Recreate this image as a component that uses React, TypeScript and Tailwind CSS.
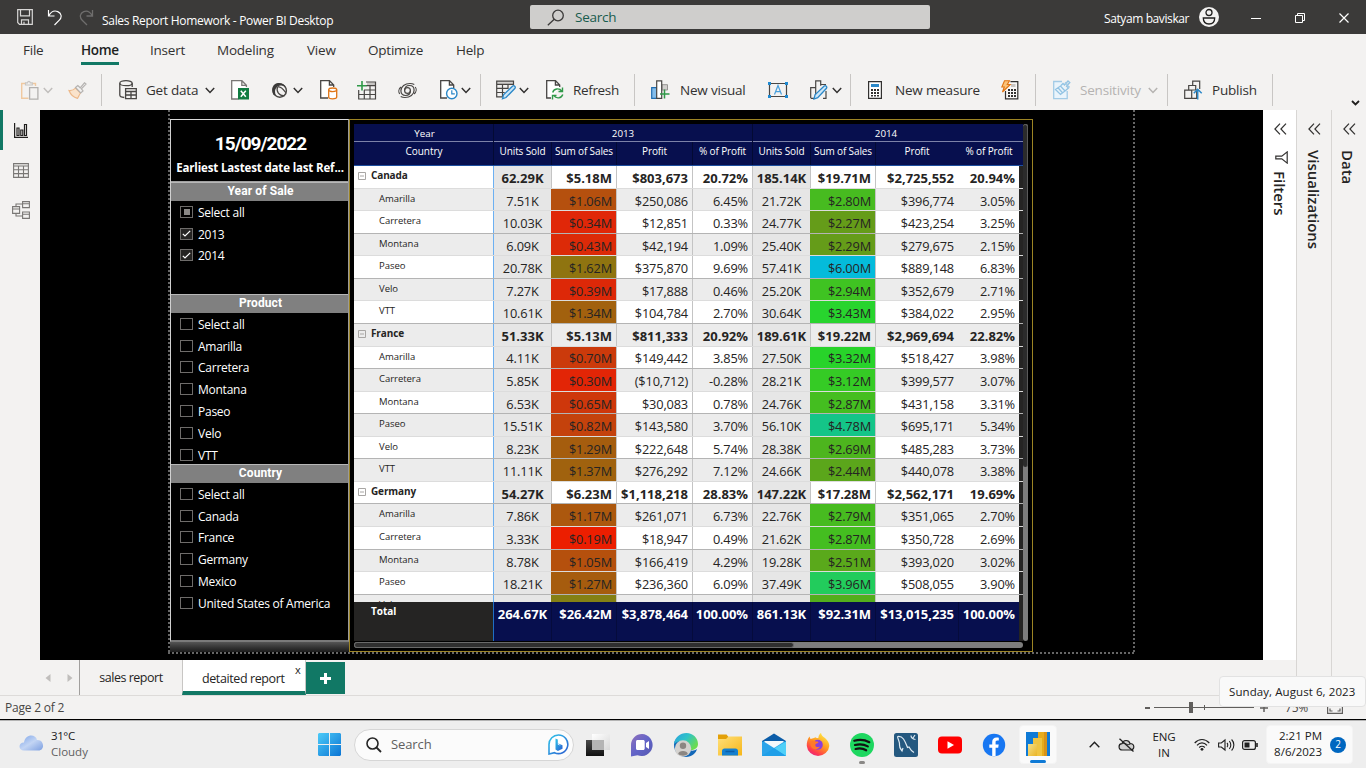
import React from "react";

type Kids = { children?: React.ReactNode; className?: string };

function Ico({ w, h, children, className = "" }: { w: number; h: number } & Kids) {
  return (
    <svg width={w} height={h} viewBox={`0 0 ${w} ${h}`} fill="none" className={`block shrink-0 ${className}`}>
      {children}
    </svg>
  );
}

function Slot({ children, className = "" }: Kids) {
  return <div className={`flex shrink-0 items-center whitespace-nowrap ${className}`}>{children}</div>;
}

function Chev({ color = "#323130" }: { color?: string }) {
  return (
    <Ico w={10} h={7}>
      <path d="M0.8 1 5 5.4 9.2 1" stroke={color} strokeWidth="1.5" />
    </Ico>
  );
}

/* ---------- Title bar ---------- */
function TitleBar() {
  return (
    <div className="flex h-[34px] shrink-0 items-center bg-[#3b3a39] text-white">
      <Slot className="w-[31px] pl-[17px]">
        <Ico w={16} h={16}>
          <path d="M.7.7h14.6v14.6H2.5L.7 13.5z M3.5.7v6.2h9V.7 M4.5 15.3v-4.5h7v4.5 M7 15.3v-2.5" stroke="#d8d7d6" strokeWidth="1.2" />
        </Ico>
      </Slot>
      <Slot className="w-[48px] pl-[16px]">
        <Ico w={16} h={17}>
          <path d="M1.5 1v6h6M1.8 6.6C4 2.8 7.5 1.2 10.8 2.6c4 1.7 4.300 5.800 1.500 8.600L7.500 16" stroke="#fff" strokeWidth="1.15" />
        </Ico>
      </Slot>
      <Slot className="w-[23px]">
        <Ico w={15} h={17}>
          <path d="M13.500 1v6h-6M13.200 6.600C11 2.800 8 1.200 4.700 2.600c-4 1.700-4.300 5.800-1.500 8.600L8 16" stroke="#6f6e6d" strokeWidth="1.3" />
        </Ico>
      </Slot>
      <Slot className="w-[428px] pt-[8px] text-[12px] tracking-[-0.310px]">Sales Report Homework - Power BI Desktop</Slot>
      <div className="flex h-[24px] w-[400px] shrink-0 items-center rounded-[2px] bg-[#cfcecc] pl-[17px]">
        <Ico w={18} h={17}>
          <circle cx="11" cy="6.500" r="5.300" stroke="#3b3a39" strokeWidth="1.300" />
          <path d="M7.200 10.300 .800 16.300" stroke="#3b3a39" strokeWidth="1.300" />
        </Ico>
        <span className="ml-[10px] text-[13.500px] tracking-[-0.250px] text-[#185c4d]">Search</span>
      </div>
      <Slot className="w-[269px] pl-[174px] pt-[3px] text-[12px] tracking-[-0.400px]">Satyam baviskar</Slot>
      <Slot className="w-[51px]">
        <Ico w={20} h={20}>
          <circle cx="10" cy="10" r="10" fill="#f3f2f1" />
          <circle cx="10" cy="5.500" r="3" stroke="#201f1e" strokeWidth="1.300" />
          <path d="M4.300 11h11.400c0 4-2.400 6-5.700 6s-5.700-2-5.700-6z" stroke="#201f1e" strokeWidth="1.300" />
        </Ico>
      </Slot>
      <Slot className="w-[45px] pt-[2px]">
        <div className="ml-[1px] h-px w-[10px] bg-white" />
      </Slot>
      <Slot className="w-[44px] pt-[2px]">
        <Ico w={10} h={10}>
          <path d="M.5 2.500h7v7h-7zM2.500 2.500v-2h7v7h-2" stroke="#fff" />
        </Ico>
      </Slot>
      <Slot className="pt-[2px]">
        <Ico w={10} h={10}>
          <path d="M.5.5l9 9M9.500.5l-9 9" stroke="#fff" strokeWidth="1.200" />
        </Ico>
      </Slot>
    </div>
  );
}

/* ---------- Ribbon ---------- */
function Divider() {
  return <div className="h-[32px] w-px bg-[#c8c6c4]" />;
}

function Ribbon() {
  const tab = "flex h-[32px] shrink-0 items-center whitespace-nowrap text-[13.500px] tracking-[-0.220px] text-[#323130]";
  return (
    <div className="flex h-[76px] shrink-0 flex-col bg-[#f3f2f1]">
      <div className="flex h-[36px] pl-[23px]">
        <div className={`${tab} w-[58px]`}>File</div>
        <div className="w-[69px] shrink-0">
          <div className="flex h-[31px] w-[38px] items-end whitespace-nowrap border-b-[3px] border-[#117865]">
            <span className="pb-[2px] text-[13.500px] font-semibold tracking-[-0.350px] text-[#201f1e]">Home</span>
          </div>
        </div>
        <div className={`${tab} w-[67px]`}>Insert</div>
        <div className={`${tab} w-[90px]`}>Modeling</div>
        <div className={`${tab} w-[61px]`}>View</div>
        <div className={`${tab} w-[88px]`}>Optimize</div>
        <div className={tab}>Help</div>
      </div>
      <div className="flex h-[40px] items-center text-[13.500px] tracking-[-0.200px] text-[#323130]">
        <Slot className="w-[43px] pl-[21px]">
          <Ico w={18} h={20}>
            <path d="M5 3.500H.7v14.800H7.500M11 3.500h3.500V6" stroke="#f0c9a0" strokeWidth="1.400" />
            <path d="M4.500 5V2.800h2C6.800 1 9 1 9.300 2.800h2V5z" stroke="#c8c6c4" strokeWidth="1.200" />
            <path d="M8.600 7.600h8.300v11.600H8.600z" stroke="#b3b1af" strokeWidth="1.300" />
          </Ico>
        </Slot>
        <Slot className="w-[25px]"><Chev color="#c0bebc" /></Slot>
        <Slot className="w-[33px]">
          <Ico w={19} h={17}>
            <path d="M1 8.500c3 .3 5-.6 6.500-2.500l5 5C11 13 10.500 15 9.500 16.300 6 15.500 2.500 12.500 1 8.500z" fill="#fae3cb" stroke="#edb98a" strokeWidth="1.200" />
            <path d="M7.500 5.500 9.800 3.500l2.400 2.300L16.500.8l1.500 1.300-4.600 4.800 1.600 2-2.300 2z" fill="#f3f2f1" stroke="#b5b3b1" strokeWidth="1.200" />
          </Ico>
        </Slot>
        <Slot className="w-[18px]"><Divider /></Slot>
        <Slot className="w-[27px]">
          <Ico w={18} h={20}>
            <ellipse cx="7" cy="3.200" rx="6.200" ry="2.500" stroke="#484644" strokeWidth="1.300" />
            <path d="M.8 3.200V15c0 1.500 2 2.300 4.500 2.500M13.200 3.200V7" stroke="#484644" strokeWidth="1.300" />
            <path d="M6.600 8.600h10.700v10H6.600zM6.600 11.500h10.700M6.600 15h10.700M12 11.500v7" stroke="#484644" strokeWidth="1.300" />
          </Ico>
        </Slot>
        <Slot className="w-[59px]">Get data</Slot>
        <Slot className="w-[26px]"><Chev /></Slot>
        <Slot className="w-[40px]">
          <Ico w={18} h={20}>
            <path d="M7.500 19H.7V.7h10.200l4.500 4.500V7M10.800.7v4.600h4.600" fill="#fff" stroke="#797775" strokeWidth="1.300" />
            <path d="M7 8h11v11.500H7z" fill="#107c41" />
            <path d="M9.800 10.800l5 6M14.800 10.800l-5 6" stroke="#fff" strokeWidth="1.500" />
          </Ico>
        </Slot>
        <Slot className="w-[22px]">
          <Ico w={17} h={17}>
            <circle cx="8.800" cy="8.700" r="6.600" fill="#f3f2f1" stroke="#484644" strokeWidth="1.400" />
            <path d="M2.300 12.500C-.5 7.500 2 1.500 7 1c4-.3 7 1.500 8 4.500C12 3.200 8.500 3 6.800 4.500 4 6.500 3.300 9 4.800 13.500z" fill="#3b3a39" />
            <path d="M6.500 5c-1.500 4.500 1.500 9 7 8.800M7 4.600c4 .2 5.800 3.400 7.800 6.200" stroke="#484644" strokeWidth="1.200" />
          </Ico>
        </Slot>
        <Slot className="w-[27px]"><Chev /></Slot>
        <Slot className="w-[37px]">
          <Ico w={18} h={20}>
            <path d="M8 18H.7V.7h8.800l4.200 4.200V7M9.400.7V5h4.300" fill="#fff" stroke="#484644" strokeWidth="1.300" />
            <path d="M8.700 9.800v7.500c0 2 8 2 8 0V9.800" fill="#fff" stroke="#e07414" strokeWidth="1.300" />
            <ellipse cx="12.700" cy="9.800" rx="4" ry="1.800" fill="#fff" stroke="#e07414" strokeWidth="1.300" />
          </Ico>
        </Slot>
        <Slot className="w-[41px]">
          <Ico w={20} h={19}>
            <path d="M10 1.500h8.500v3H10z" fill="#c8c6c4" />
            <path d="M9 1h9.500v17H1.700V9M1.700 13.500h16.800M7.300 18V9M13 18V4.500M9 4.700h9.500M7 9h11.500" stroke="#484644" strokeWidth="1.200" />
            <path d="M5 0v9.500M0 4.700h9.500" stroke="#2f9948" strokeWidth="1.600" />
          </Ico>
        </Slot>
        <Slot className="w-[42px]">
          <Ico w={19} h={17}>
            <circle cx="9.500" cy="8.500" r="2.900" stroke="#484644" strokeWidth="1.200" />
            <path d="M12.400 8.500c0 3.200-2 5-4.900 5-3 0-4.600-2.200-4.600-4.700C2.900 4.500 7 1.500 12 1.500c1.500 0 3 .3 4.300 1" stroke="#484644" strokeWidth="1.200" />
            <path d="M6.600 8.500c0-3.200 2-5 4.900-5 3 0 4.600 2.200 4.600 4.700 0 4.300-4.100 7.300-9.100 7.300-1.500 0-3-.3-4.300-1" stroke="#484644" strokeWidth="1.200" />
            <path d="M2.900 5C.5 7 .3 10 1.800 12M16.100 12c2.400-2 2.600-5 1.100-7" stroke="#484644" strokeWidth="1.100" />
          </Ico>
        </Slot>
        <Slot className="w-[21px]">
          <Ico w={18} h={20}>
            <path d="M7 18H.7V.7h8.800l4.200 4.200V8M9.400.7V5h4.300" fill="#fff" stroke="#484644" strokeWidth="1.300" />
            <circle cx="11.800" cy="13.500" r="5.200" fill="#fff" stroke="#2b88c8" strokeWidth="1.400" />
            <path d="M11.800 10.300v3.500h3" stroke="#2b88c8" strokeWidth="1.200" />
          </Ico>
        </Slot>
        <Slot className="w-[19px]"><Chev /></Slot>
        <Slot className="w-[16px]"><Divider /></Slot>
        <Slot className="w-[23px]">
          <Ico w={20} h={20}>
            <path d="M.7 1.200h16.800v3H.7z" fill="#d2d0ce" />
            <path d="M17.500 5V1.200H.7v15.600h6M.7 4.400h16.800M.7 8.400h12M.7 12.500h8M6.500 4.400v12.400M12 4.400v4" stroke="#484644" strokeWidth="1.200" />
            <path d="M6.500 18.800l1-4L16.700 6c1.500-1 3.200.7 2.300 2.300L10 17.500z" fill="#cde6f7" stroke="#2b88c8" strokeWidth="1.300" />
          </Ico>
        </Slot>
        <Slot className="w-[27px]"><Chev /></Slot>
        <Slot className="w-[27px]">
          <Ico w={18} h={20}>
            <path d="M5 18H.7V.7h8.800l4.200 4.200V7M9.400.7V5h4.300" fill="#fff" stroke="#484644" strokeWidth="1.300" />
            <path d="M6.700 12.500c1-4 6.500-5 9-1.500M16.500 7.500v4h-4M16.800 14.500c-1.500 4-6.500 4.500-9 1.200M6.500 19.500v-4h4" stroke="#2f9948" strokeWidth="1.400" />
          </Ico>
        </Slot>
        <Slot className="w-[61px] tracking-[-0.350px]">Refresh</Slot>
        <Slot className="w-[17px]"><Divider /></Slot>
        <Slot className="w-[29px]">
          <Ico w={19} h={20}>
            <path d="M.7 7.700h5v10.600h-5z" fill="#83bdeb" stroke="#1f6cb0" strokeWidth="1.200" />
            <path d="M11 4.700h5.500V10H11z" fill="#d2d0ce" stroke="#979593" />
            <path d="M5.700.8h5v17.500h-5z" fill="#fff" stroke="#484644" strokeWidth="1.200" />
            <path d="M13.500 9.500v9M9 14h9.500" stroke="#2f9948" strokeWidth="1.500" />
          </Ico>
        </Slot>
        <Slot className="w-[88px]">New visual</Slot>
        <Slot className="w-[42px]">
          <Ico w={20} h={16}>
            <path d="M1.500 1.500h17v13h-17z" stroke="#484644" strokeWidth="1.200" />
            <path d="M0 0h3v3H0zM17 0h3v3h-3zM0 13h3v3H0zM17 13h3v3h-3z" fill="#1f8ad2" />
            <path d="M6.500 12.500 10 3.500l3.500 9M7.700 9.700h4.600" stroke="#4aa0dc" strokeWidth="1.200" />
          </Ico>
        </Slot>
        <Slot className="w-[22px]">
          <Ico w={19} h={20}>
            <path d="M.7 18V7.700h5V18M5.700 7.700v-6.900h5v5M16 11v7.300h-3M.7 18.300H4M11 4.500h5" stroke="#484644" strokeWidth="1.200" />
            <path d="M4 19l1-4.200L14.200 6c1.500-1 3.200.7 2.300 2.300L7.700 17.700z" fill="#cde6f7" stroke="#2b88c8" strokeWidth="1.300" />
          </Ico>
        </Slot>
        <Slot className="w-[18px]"><Chev /></Slot>
        <Slot className="w-[18px]"><Divider /></Slot>
        <Slot className="w-[27px]">
          <Ico w={14} h={18}>
            <path d="M.6.6h12.800v16.800H.6z" fill="#fff" stroke="#323130" strokeWidth="1.200" />
            <path d="M3 3h8v3H3z" fill="#2b88c8" />
            <path d="M3 8h2v2H3zM6 8h2v2H6zM9 8h2v2H9zM3 11h2v2H3zM6 11h2v2H6zM9 11h2v2H9zM3 14h2v1.500H3zM6 14h2v1.500H6zM9 14h2v1.500H9z" fill="#323130" />
          </Ico>
        </Slot>
        <Slot className="w-[106px]">New measure</Slot>
        <Slot className="w-[34px]">
          <Ico w={18} h={20}>
            <path d="M9.500 1.700h7.300v17.200H4.500V11" fill="#f8f7f6" stroke="#323130" strokeWidth="1.200" />
            <path d="M10 4h4.500v3H10z" fill="#c8c6c4" />
            <path d="M7 9h2v2H7zM10 9h2v2h-2zM13 9h2v2h-2zM7 12h2v2H7zM10 12h2v2h-2zM13 12h2v2h-2zM7 15h2v2H7zM10 15h2v2h-2zM13 15h2v2h-2z" fill="#323130" />
            <path d="M3.500.7h5L6.300 4.500h3L1.500 12l1.800-5H.8z" fill="#fbc37a" stroke="#e07414" strokeWidth="1.100" />
          </Ico>
        </Slot>
        <Slot className="w-[18px]"><Divider /></Slot>
        <Slot className="w-[27px]">
          <Ico w={18} h={20}>
            <path d="M9 1.500H.7v17.200h13.500V11" fill="#eaf4fb" stroke="#a3cbe6" strokeWidth="1.300" />
            <path d="M2.500 9.500 7.500 6l4.500 5-4.500 3.500z M5 7.800l4.500 5M8 5.500l2-2 1.500 1.500L15 1l1.800 1.500-3.300 3.700L15.500 8 12 11" stroke="#92c3e3" strokeWidth="1.300" />
            <path d="M12 2.500l2 2M14.500 6l2 1.500" stroke="#a3cbe6" strokeWidth="2" />
          </Ico>
        </Slot>
        <Slot className="w-[68px] text-[#b5b3b1]">Sensitivity</Slot>
        <Slot className="w-[19px]"><Chev color="#b5b3b1" /></Slot>
        <Slot className="w-[17px]"><Divider /></Slot>
        <Slot className="w-[28px]">
          <Ico w={19} h={20}>
            <path d="M.7 10.200h7v8.100h-7zM4.700 10V5.500h7V10M7.700 10h5v8.300h-5M8.700 5.500V1.200h7V9" stroke="#484644" strokeWidth="1.200" />
            <path d="M13.700 19.500V10M9.800 13.200l3.900-4 4 4" stroke="#2b88c8" strokeWidth="1.500" />
          </Ico>
        </Slot>
        <Slot className="w-[60px]">Publish</Slot>
        <Slot className="w-[79px]"><Divider /></Slot>
        <Slot className="pt-[26px]">
          <Ico w={9} h={6}>
            <path d="M1 1l3.500 3.500L8 1" stroke="#201f1e" strokeWidth="1.800" />
          </Ico>
        </Slot>
      </div>
    </div>
  );
}

/* ---------- Left rail ---------- */
function Rail() {
  return (
    <div className="flex w-[40px] shrink-0 flex-col bg-[#f3f2f1]">
      <div className="flex h-[40px] items-center border-l-[3px] border-[#117865] pl-[11px]">
        <Ico w={14} h={15}>
          <path d="M.6 0v14.400H14M3 5h2v7.500H3zM6.800 7h2v5.500h-2zM10.500 1.500h2v11h-2z" stroke="#201f1e" strokeWidth="1.200" />
        </Ico>
      </div>
      <div className="flex h-[40px] items-center pl-[13px]">
        <Ico w={16} h={15}>
          <path d="M.6.6h14.800v13.800H.6zM.6 3h14.800M.6 6.800h14.800M.6 10.600h14.800M5.500 3v11.400M10.500 3v11.400" stroke="#797775" strokeWidth="1.100" />
        </Ico>
      </div>
      <div className="flex h-[40px] items-center pl-[12px]">
        <Ico w={18} h={18}>
          <path d="M.6 5.600h7v6.800h-7zM.6 8h7M10.600.6h6.800v6h-6.800zM10.600 2.800h6.800M10.600 11h6.800v6.400h-6.800zM10.600 13.300h6.800M4 5.600V3h6.600M4 12.400V15h6.600" stroke="#797775" strokeWidth="1.100" />
        </Ico>
      </div>
    </div>
  );
}

/* ---------- Slicers ---------- */
type Mark = "none" | "part" | "on";
function Check({ label, mark = "none" }: { label: string; mark?: Mark }) {
  return (
    <div className="flex h-[21.800px] shrink-0 items-center pl-[9px]">
      <div className={`flex h-[12px] w-[13px] shrink-0 items-center justify-center border border-[#6e6c6a] ${mark === "on" ? "bg-[#252423]" : ""}`}>
        {mark === "part" && <div className="h-[6px] w-[6px] bg-[#8a8886]" />}
        {mark === "on" && (
          <Ico w={9} h={7}>
            <path d="M.8 3.800 3 6 8.200.8" stroke="#fff" strokeWidth="1.200" />
          </Ico>
        )}
      </div>
      <span className="ml-[5px] whitespace-nowrap pt-[2px] text-[12px] tracking-[-0.250px] text-white">{label}</span>
    </div>
  );
}

function SlicerHead({ children }: Kids) {
  return (
    <div className="h-[19px] shrink-0 border-t border-[#b8b8b8] bg-[#808080] pl-[2px] text-center font-['Roboto',sans-serif] text-[12px] font-bold leading-[17px] tracking-[0.100px] text-white">
      {children}
    </div>
  );
}

function Slicers() {
  return (
    <div className="flex w-[179px] shrink-0 flex-col">
      <div className="flex h-[523px] flex-col border border-b-2 border-b-[#7a7a7a] border-l-[#d0d0d0] border-r-[#9a9a9a] border-t-[#d8d8d8] bg-black">
        <div className="flex h-[62px] shrink-0 flex-col items-center border-b border-[#a0a0a0]">
          <div className="mt-[10px] h-[27px] pl-[2px] font-['Roboto',sans-serif] text-[19px] font-bold leading-[28px] tracking-[-1px] text-white">15/09/2022</div>
          <div className="mt-[3px] whitespace-nowrap pl-px text-[11.500px] font-bold leading-[16px] tracking-[-0.150px] text-white">Earliest Lastest date last Ref...</div>
        </div>
        <SlicerHead>Year of Sale</SlicerHead>
        <div className="h-[93px] shrink-0 overflow-hidden">
          <Check label="Select all" mark="part" />
          <Check label="2013" mark="on" />
          <Check label="2014" mark="on" />
        </div>
        <SlicerHead>Product</SlicerHead>
        <div className="h-[151px] shrink-0 overflow-hidden">
          {["Select all", "Amarilla", "Carretera", "Montana", "Paseo", "Velo", "VTT"].map((l) => (
            <Check key={l} label={l} />
          ))}
        </div>
        <SlicerHead>Country</SlicerHead>
        <div className="grow overflow-hidden">
          {["Select all", "Canada", "France", "Germany", "Mexico", "United States of America"].map((l) => (
            <Check key={l} label={l} />
          ))}
        </div>
      </div>
      <div className="h-[10px] bg-gradient-to-b from-[#555] to-[#1a1a1a]" />
    </div>
  );
}

/* ---------- Matrix ---------- */
type RowData = { n: string; b?: boolean; v: string[]; c?: [string, string] };
const rows: RowData[] = [
  { n: "Canada", b: true, v: ["62.29K", "$5.18M", "$803,673", "20.72%", "185.14K", "$19.71M", "$2,725,552", "20.94%"] },
  { n: "Amarilla", v: ["7.51K", "$1.06M", "$250,086", "6.45%", "21.72K", "$2.80M", "$396,774", "3.05%"], c: ["bg-[#b5500e]", "bg-[#47bb20]"] },
  { n: "Carretera", v: ["10.03K", "$0.34M", "$12,851", "0.33%", "24.77K", "$2.27M", "$423,254", "3.25%"], c: ["bg-[#e02708]", "bg-[#659c19]"] },
  { n: "Montana", v: ["6.09K", "$0.43M", "$42,194", "1.09%", "25.40K", "$2.29M", "$279,675", "2.15%"], c: ["bg-[#dc2a08]", "bg-[#659c19]"] },
  { n: "Paseo", v: ["20.78K", "$1.62M", "$375,870", "9.69%", "57.41K", "$6.00M", "$889,148", "6.83%"], c: ["bg-[#8f7410]", "bg-[#04bbdb]"] },
  { n: "Velo", v: ["7.27K", "$0.39M", "$17,888", "0.46%", "25.20K", "$2.94M", "$352,679", "2.71%"], c: ["bg-[#dd2808]", "bg-[#3fc322]"] },
  { n: "VTT", v: ["10.61K", "$1.34M", "$104,784", "2.70%", "30.64K", "$3.43M", "$384,022", "2.95%"], c: ["bg-[#a2610e]", "bg-[#28d42e]"] },
  { n: "France", b: true, v: ["51.33K", "$5.13M", "$811,333", "20.92%", "189.61K", "$19.22M", "$2,969,694", "22.82%"] },
  { n: "Amarilla", v: ["4.11K", "$0.70M", "$149,442", "3.85%", "27.50K", "$3.32M", "$518,427", "3.98%"], c: ["bg-[#cb3a0b]", "bg-[#28d32a]"] },
  { n: "Carretera", v: ["5.85K", "$0.30M", "($10,712)", "-0.28%", "28.21K", "$3.12M", "$399,577", "3.07%"], c: ["bg-[#e22506]", "bg-[#35cb25]"] },
  { n: "Montana", v: ["6.53K", "$0.65M", "$30,083", "0.78%", "24.76K", "$2.87M", "$431,158", "3.31%"], c: ["bg-[#ce370b]", "bg-[#44be20]"] },
  { n: "Paseo", v: ["15.51K", "$0.82M", "$143,580", "3.70%", "56.10K", "$4.78M", "$695,171", "5.34%"], c: ["bg-[#c4420c]", "bg-[#14c588]"] },
  { n: "Velo", v: ["8.23K", "$1.29M", "$222,648", "5.74%", "28.38K", "$2.69M", "$485,283", "3.73%"], c: ["bg-[#a55d0e]", "bg-[#4db51e]"] },
  { n: "VTT", v: ["11.11K", "$1.37M", "$276,292", "7.12%", "24.66K", "$2.44M", "$440,078", "3.38%"], c: ["bg-[#a0620e]", "bg-[#5ba61b]"] },
  { n: "Germany", b: true, v: ["54.27K", "$6.23M", "$1,118,218", "28.83%", "147.22K", "$17.28M", "$2,562,171", "19.69%"] },
  { n: "Amarilla", v: ["7.86K", "$1.17M", "$261,071", "6.73%", "22.76K", "$2.79M", "$351,065", "2.70%"], c: ["bg-[#ac580e]", "bg-[#47bb20]"] },
  { n: "Carretera", v: ["3.33K", "$0.19M", "$18,947", "0.49%", "21.62K", "$2.87M", "$350,728", "2.69%"], c: ["bg-[#ec1e00]", "bg-[#44be20]"] },
  { n: "Montana", v: ["8.78K", "$1.05M", "$166,419", "4.29%", "19.28K", "$2.51M", "$393,020", "3.02%"], c: ["bg-[#b5500d]", "bg-[#5aa91b]"] },
  { n: "Paseo", v: ["18.21K", "$1.27M", "$236,360", "6.09%", "37.49K", "$3.96M", "$508,055", "3.90%"], c: ["bg-[#a65c0e]", "bg-[#22cc5c]"] },
  { n: "Velo", v: ["", "", "", "", "", "", "", ""], c: ["bg-[#848014]", "bg-[#53ae1c]"] },
];
const cols = "grid grid-cols-[139px_58px_65px_76px_60px_58px_65px_83px_61px]";
const heads = ["Units Sold", "Sum of Sales", "Profit", "% of Profit"];

function Row({ r, i }: { r: RowData; i: number }) {
  const base = i % 2 ? "bg-[#ececec]" : "bg-white";
  const line = i % 2 || i === 0 ? "border-b border-[#dcdcdc]" : "border-b border-[#b4b4b4]";
  const font = r.b ? "pt-[2px] text-[13px] font-bold tracking-[0px]" : "pt-[2.400px] text-[12.800px] tracking-[-0.170px]";
  return (
    <div className={`${cols} h-[22.570px] w-[669px] bg-[#252423] text-[#252423] ${line}`}>
      <div className={`flex ${base}`}>
        {r.b ? (
          <>
            <Ico w={8} h={8} className="ml-[4px] mt-[6px]">
              <path d="M.5.5h7v7h-7zM2 4h4" stroke="#a8a6a4" />
            </Ico>
            <span className="ml-[5px] mt-[2px] text-[10px] font-bold leading-[14px] tracking-[-0.120px]">{r.n}</span>
          </>
        ) : (
          <span className="ml-[25px] mt-[3px] text-[9.500px] leading-[14px] tracking-[-0.030px]">{r.n}</span>
        )}
      </div>
      {r.v.map((v, k) => {
        const sales = k % 4 === 1;
        const units = k % 4 === 0;
        const filled = sales && r.c;
        const bg = sales && r.c ? r.c[k > 3 ? 1 : 0] : units ? "bg-[#e6e6e6]" : base;
        const al = units ? "justify-center" : "justify-end pr-[4px]";
        const edge =
          k === 0 ? "border-l border-[#6cb0f2]" : filled || k === 7 ? "border-l border-transparent" : "border-l border-[#c4c4c4]";
        return (
          <div key={k} className={`flex items-center whitespace-nowrap leading-[18px] ${font} ${bg} ${al} ${edge}`}>
            <span>{v}</span>
          </div>
        );
      })}
    </div>
  );
}

function Matrix() {
  const total = ["264.67K", "$26.42M", "$3,878,464", "100.00%", "861.13K", "$92.31M", "$13,015,235", "100.00%"];
  return (
    <div className="flex h-[533px] w-[684px] shrink-0 flex-col border border-[#9c8424] bg-black pl-[4px] pt-[4px]">
      <div className="flex">
        <div className="w-[669px]">
          <div className="grid h-[18px] grid-cols-[139px_259px_271px] border-b border-[#7c82a8] bg-[#070f4e] text-center text-[9.800px] leading-[19px] text-white">
            <div className="pl-[2px]">Year</div>
            <div className="border-l border-[#030a33]">2013</div>
            <div className="border-l border-[#030a33] pr-[4px]">2014</div>
          </div>
          <div className={`${cols} h-[24px] border-b border-[#1d4f9f] bg-[#070f4e] text-center text-[10px] leading-[19px] text-white`}>
            <div className="pl-px">Country</div>
            {heads.concat(heads).map((h, k) => (
              <div key={k} className={`whitespace-nowrap border-l tracking-[-0.120px] ${k === 7 ? "border-transparent" : "border-[#030a33]"}`}>{h}</div>
            ))}
          </div>
          <div className="h-[436px] overflow-hidden">
            {rows.map((r, i) => (
              <Row key={i} r={r} i={i} />
            ))}
          </div>
          <div className={`${cols} h-[39px] bg-[#252423] text-[13px] font-bold leading-[25px] text-white`}>
            <div className="pl-[17px] text-[10px] leading-[19px]">Total</div>
            {total.map((t, k) => (
              <div
                key={k}
                className={`whitespace-nowrap border-l bg-[#070f4e] ${k === 0 ? "border-[#1f6fc4]" : "border-[#050b3c]"} ${k % 4 === 0 ? "text-center" : "pr-[4px] text-right tracking-[-0.060px]"}`}
              >
                {t}
              </div>
            ))}
          </div>
        </div>
        <div className="flex h-[517px] w-[5px] flex-col rounded-[3px] bg-[#7d7d7d]">
          <div className="h-[343px] rounded-[3px] border-r border-t border-[#5a5a5a] bg-[#2b2b2b]" />
        </div>
      </div>
      <div className="mt-px flex h-[6px] w-[669px] rounded-full bg-[#7d7d7d]">
        <div className="h-[6px] w-[440px] rounded-full border border-[#6a6a6a] bg-[#2f2f2f]" />
      </div>
    </div>
  );
}

/* ---------- Right panes ---------- */
function Collapse() {
  return (
    <Ico w={13} h={12}>
      <path d="M6 .6.900 6 6 11.400M12 .6 6.900 6 12 11.400" stroke="#323130" strokeWidth="1.200" />
    </Ico>
  );
}

function Panes() {
  const v = "[writing-mode:vertical-rl] text-[15px] font-semibold leading-[16px] tracking-[-0.020px] text-[#252423]";
  return (
    <div className="flex shrink-0">
      <div className="flex w-[33px] flex-col items-center bg-white pl-px pt-[13px]">
        <Collapse />
        <Ico w={13} h={13} className="mb-[7px] ml-[3px] mt-[16px]">
          <path d="M12.200.9v11.200L6.800 7.800H.8V5.200h6z" stroke="#323130" strokeWidth="1.200" />
        </Ico>
        <div className={v}>Filters</div>
      </div>
      <div className="flex w-[35px] flex-col items-center border-l border-[#d8d6d4] bg-[#f3f2f1] pt-[13px]">
        <Collapse />
        <div className={`mt-[15px] ${v}`}>Visualizations</div>
      </div>
      <div className="flex w-[35px] flex-col items-center border-l border-[#d8d6d4] bg-[#f3f2f1] pt-[13px]">
        <Collapse />
        <div className={`mr-[3px] mt-[15px] ${v}`}>Data</div>
      </div>
    </div>
  );
}

/* ---------- Page tabs and status ---------- */
function PageTabs() {
  return (
    <div className="flex h-[35px] shrink-0 bg-[#f3f2f1] text-[12.500px] tracking-[-0.400px] text-[#252423]">
      <Slot className="w-[79px] pl-[45px]">
        <Ico w={6} h={8}><path d="M5.500 0v8L.5 4z" fill="#c0bebc" /></Ico>
        <Ico w={6} h={8} className="ml-[16px]"><path d="M.5 0v8l5-4z" fill="#c0bebc" /></Ico>
      </Slot>
      <div className="flex w-[103px] items-center justify-center border-l border-[#a19f9d] pt-[2px] tracking-[-0.480px]">sales report</div>
      <div className="flex w-[124px] border-b-[4px] border-l border-r border-b-[#117865] border-l-[#c8c6c4] border-r-[#c8c6c4] bg-white">
        <span className="ml-[19px] mt-[10px] w-[93px] shrink-0 whitespace-nowrap leading-[18px]">detaited report</span>
        <span className="mt-[3px] text-[11px] leading-[13px]">x</span>
      </div>
      <div className="mt-[2px] flex h-[32px] w-[39px] items-center justify-center bg-[#117865]">
        <Ico w={11} h={11}><path d="M5.500 0v11M0 5.500h11" stroke="#fff" strokeWidth="3" /></Ico>
      </div>
      <div className="ml-[951px] w-px bg-[#d8d6d4]" />
      <div className="ml-[34px] w-px bg-[#d8d6d4]" />
    </div>
  );
}

function StatusBar() {
  return (
    <div className="flex h-[24px] shrink-0 items-center border-t border-[#dddbd9] bg-[#f3f2f1] text-[#484644]">
      <Slot className="w-[1145px] pl-[5px] pt-px text-[12px] tracking-[-0.200px]">Page 2 of 2</Slot>
      <Slot className="w-[9px]"><div className="h-[2px] w-[5px] bg-[#605e5c]" /></Slot>
      <Slot className="w-[106px]">
        <div className="h-px w-[35px] bg-[#605e5c]" />
        <div className="h-[11px] w-[4px] bg-[#605e5c]" />
        <div className="h-px w-[11px] bg-[#605e5c]" />
        <div className="h-[5px] w-px bg-[#605e5c]" />
        <div className="h-px w-[49px] bg-[#605e5c]" />
      </Slot>
      <Slot className="w-[25px]">
        <Ico w={8} h={8}><path d="M4 0v8M0 4h8" stroke="#605e5c" strokeWidth="1.500" /></Ico>
      </Slot>
      <Slot className="w-[42px] text-[12px] tracking-[-0.200px]">75%</Slot>
      <Ico w={16} h={12}>
        <path d="M.6.6h14.800v10.800H.6zM3 6.500v2.500h2.500M13 6.500v2.500h-2.500" stroke="#605e5c" strokeWidth="1.200" />
      </Ico>
    </div>
  );
}

/* ---------- Taskbar ---------- */
function Apps() {
  return (
    <div className="flex w-[422px] shrink-0 items-center gap-[20px]">
      <Ico w={24} h={24}>
        <defs>
          <linearGradient id="tv1" x1="0" y1="0" x2="0" y2="1"><stop stopColor="#4a4a4a" /><stop offset="1" stopColor="#111" /></linearGradient>
          <linearGradient id="tv2" x1="0" y1="0" x2="1" y2="1"><stop stopColor="#fff" /><stop offset="1" stopColor="#d8d8d8" /></linearGradient>
        </defs>
        <path d="M0 7h18v16H0z" fill="url(#tv1)" />
        <path d="M6 1h18v16H6z" fill="url(#tv2)" />
        <path d="M6 7h12v10H6z" fill="#b4b4b4" />
      </Ico>
      <Ico w={24} h={24}>
        <defs><linearGradient id="ch" x1="0" y1="0" x2="1" y2="1"><stop stopColor="#9070bc" /><stop offset=".5" stopColor="#6264c8" /><stop offset="1" stopColor="#5558b0" /></linearGradient></defs>
        <path d="M12 1a11 11 0 1 1-4.500 21.200L1 23.500V12A11 11 0 0 1 12 1z" fill="url(#ch)" />
        <path d="M6 8.500c0-.8.600-1.500 1.500-1.500h5.700c.8 0 1.500.7 1.500 1.500v7c0 .8-.7 1.500-1.500 1.500H7.500c-.9 0-1.500-.7-1.500-1.500z" fill="#fff" />
        <path d="M16 10l3-2v8l-3-2z" fill="#fff" />
      </Ico>
      <Ico w={24} h={24}>
        <defs>
          <linearGradient id="eg" x1="0" y1="0" x2="1" y2=".6"><stop stopColor="#2b9fe0" /><stop offset=".5" stopColor="#2fc3c8" /><stop offset="1" stopColor="#6bdc50" /></linearGradient>
        </defs>
        <path d="M0 12C0 7 3 4 8 5c5 1 6 6 6 11 3 2.500 6 2 9 0-1 4-5 8-11 8C5 24 0 19 0 12z" fill="#1267b8" />
        <path d="M0 11C1 4 6 0 12.500 0 19 0 24 5 24 11c0 3.500-3 6-6.500 6-3 0-4.500-1-4.200-2.500C15 12 13 8 8.500 8 5 8 2 9 0 11z" fill="url(#eg)" />
        <circle cx="9" cy="15.500" r="8.200" fill="#d4d2cf" />
        <circle cx="9" cy="12.800" r="3.200" fill="#8b8682" />
        <path d="M4.200 21c0-4 9.600-4 9.600 0-2.500 2.200-7 2.200-9.600 0z" fill="#8b8682" />
      </Ico>
      <Ico w={24} h={24}>
        <defs><linearGradient id="fd" x1="0" y1="0" x2="1" y2="1"><stop stopColor="#ffe07a" /><stop offset="1" stopColor="#f6b619" /></linearGradient></defs>
        <path d="M0 1.500h8.500l2 2.500H10v4H0z" fill="#e3a008" />
        <path d="M0 6h8l2.500-2.500H24V22.500H0z" fill="url(#fd)" />
        <path d="M4 22.500V18c0-1.500 1-2.500 2.500-2.500h11c1.500 0 2.500 1 2.500 2.500v4.500z" fill="#1480d0" />
        <path d="M7.500 18.500h9" stroke="#0b5ea8" strokeWidth="1.500" />
      </Ico>
      <Ico w={24} h={24}>
        <path d="M0 8 12 .5 24 8v3H0z" fill="#0b5ca8" />
        <path d="M0 8.500V23h24V8.500z" fill="#2ba4ea" />
        <path d="M24 8.500V23L12 15.500z" fill="#50d0f8" />
        <path d="M0 23l12-8 12 8z" fill="#1f9fe8" />
        <path d="M2.500 8h19v1L12 15 2.500 9z" fill="#f4f8fb" />
      </Ico>
      <Ico w={24} h={24}>
        <defs>
          <linearGradient id="ff" x1=".8" y1="0" x2=".2" y2="1"><stop stopColor="#fff14a" /><stop offset=".45" stopColor="#ff9a1f" /><stop offset=".8" stopColor="#ff3b4e" /><stop offset="1" stopColor="#e3208a" /></linearGradient>
        </defs>
        <path d="M15 0c.5 2.500 2 3.500 4 5 3 2.500 4.300 5.500 4.300 8A11.300 11 0 0 1 .8 13C.6 9.500 1.500 6 3.500 3.500L4.500 6 8 5l1.500-.8C10 5 12 5.500 12.500 4.500 12.500 2.500 13.500 1 15 0z" fill="url(#ff)" />
        <circle cx="11.800" cy="11.800" r="5" fill="#8a3fdc" />
        <path d="M4.500 8c2-1 4-.5 5 .5 1 0 2.500 0 3 .8-.5 1.200-2.500 1-3.200 2.400-.2 2 2 3 4.500 1.800-1 3-6.500 4-8.500.5C4.300 12 4 10 4.500 8z" fill="#ff7a28" />
      </Ico>
      <div className="flex h-[48px] flex-col items-center pt-[12px]">
        <Ico w={24} h={24}>
          <circle cx="12" cy="12" r="12" fill="#1ed760" />
          <path d="M4.300 7.800c5-1.400 10.500-1 15 1.400M5 12c4.500-1.200 9-.8 12.800 1.400M5.600 16c3.600-.9 7.500-.6 10.600 1.300" stroke="#111" strokeWidth="2.200" strokeLinecap="round" />
        </Ico>
        <div className="mt-[4px] h-[3px] w-[6px] rounded-full bg-[#8a8886]" />
      </div>
      <Ico w={24} h={24}>
        <rect width="24" height="24" rx="2.500" fill="#24587f" />
        <path d="M3.500 3.500C6 3 8 4 9.500 6c2 3 3 6 4 8.500l1.500-.5c1 2 2.500 4 5 5.500M3.500 3.500C4 7 6 9 5.500 12c-.3 2.500 1 4 2.500 6l1-3M17 2.500c0 2 1.500 3.500 4.500 4M19 5l2-3" stroke="#dfeaf2" strokeWidth="1.200" />
      </Ico>
      <Ico w={24} h={24}>
        <rect y="3.500" width="24" height="17" rx="4" fill="#f00" />
        <path d="M9.500 8.300v7.400l6.500-3.700z" fill="#fff" />
      </Ico>
      <Ico w={24} h={24}>
        <circle cx="12" cy="12" r="11.200" fill="#1877f2" />
        <path d="M10.200 23V14.700H7.300v-3.300h2.900V9c0-2.900 1.700-4.500 4.400-4.500 1 0 2.200.2 2.200.2v2.800h-1.500c-1.400 0-1.700.9-1.700 1.700v2.200h3.100l-.5 3.300h-2.600V23z" fill="#fff" />
      </Ico>
    </div>
  );
}

function Taskbar() {
  return (
    <div className="flex h-[49px] shrink-0 items-center border-t border-[#b4b4b4] bg-[#eeeeee] pb-px text-[#202020]">
      <Slot className="w-[51px] pb-[4px] pl-[19px]">
        <Ico w={25} h={16}>
          <defs><linearGradient id="cl" x1="0" y1="0" x2="1" y2="1"><stop stopColor="#7ba3e8" /><stop offset=".5" stopColor="#c3d5f4" /><stop offset="1" stopColor="#7d9fe0" /></linearGradient></defs>
          <path d="M5 15.500c-6 0-6-8 0-8C6-1.500 17-1.500 18 5c7-1 8.500 10.500 1.500 10.500z" fill="url(#cl)" />
        </Ico>
      </Slot>
      <div className="w-[267px] shrink-0 pb-[2px] text-[11.500px] leading-[16px]">
        <div className="tracking-[-0.400px]">31°C</div>
        <div className="text-[#606060]">Cloudy</div>
      </div>
      <Slot className="w-[36px]">
        <Ico w={23} h={23}>
          <defs><linearGradient id="win" x1="0" y1="0" x2="1" y2="1"><stop stopColor="#4ccbf8" /><stop offset="1" stopColor="#0b74d4" /></linearGradient></defs>
          <path d="M1 0h10v11H0V1zM12 0h10l1 1v10H12zM0 12h11v11H1l-1-1zM12 12h11v10l-1 1H12z" fill="url(#win)" />
        </Ico>
      </Slot>
      <div className="mr-[12px] flex h-[32px] w-[220px] shrink-0 items-center rounded-full border border-[#d6d6d6] bg-[#fbfbfb] pl-[11px]">
        <Ico w={16} h={16}>
          <circle cx="6.500" cy="6.500" r="5.500" stroke="#252525" strokeWidth="1.600" />
          <path d="M10.500 10.500l4.500 4.500" stroke="#252525" strokeWidth="1.800" />
        </Ico>
        <span className="ml-[9px] w-[157px] text-[13px] tracking-[-0.100px] text-[#606060]">Search</span>
        <Ico w={21} h={21}>
          <defs><linearGradient id="bg" x1="0" y1="0" x2="1" y2="1"><stop stopColor="#2fc6ea" /><stop offset="1" stopColor="#2a5bd0" /></linearGradient></defs>
          <path d="M10.500 1a9.300 9.300 0 1 1-4 17.700L1 20V10.500A9.400 9.400 0 0 1 10.500 1z" stroke="url(#bg)" strokeWidth="1.600" fill="#fff" />
          <path d="M7.500 4.500l2.300.9v5l4.700 2v2.300l-4.600 2.300-2.400-1.500z M9.800 9.300l4.700 2v2" fill="url(#bg)" />
        </Ico>
      </div>
      <Apps />
      <div className="ml-[11px] flex h-[39px] w-[38px] shrink-0 flex-col items-center rounded-[4px] border border-[#f4f4f4] bg-[#fafafa] pt-[6px]">
        <Ico w={24} h={24}>
          <defs><linearGradient id="pb" x1="0" y1="0" x2="1" y2="1"><stop stopColor="#f5e08a" /><stop offset="1" stopColor="#eab424" /></linearGradient></defs>
          <path d="M0 0h24v24H0z" fill="#0f7ad6" />
          <path d="M12 0h9v24h-9z" fill="#d8931a" />
          <path d="M12 0h6v24h-6z" fill="#e8ac1c" />
          <path d="M7 6h9v18H7z" fill="#f0c440" />
          <path d="M2 12h9v12H2z" fill="url(#pb)" />
        </Ico>
        <div className="mt-[4px] h-[3px] w-[16px] shrink-0 rounded-full bg-[#0f7ad6]" />
      </div>
      <Slot className="w-[61px] pl-[32px]">
        <Ico w={11} h={7}><path d="M.7 6.200 5.500 1.200l4.800 5" stroke="#202020" strokeWidth="1.400" /></Ico>
      </Slot>
      <Slot className="w-[34px]">
        <Ico w={17} h={14}>
          <path d="M4.500 12C0 12 0 6 4 5.700 5 1.500 11 1.500 12 5.500c5 0 5 6.500.5 6.500z" fill="#d0d0d0" stroke="#202020" strokeWidth="1.200" />
          <path d="M4.500 5.500C8 4.500 9 8 12.500 6" stroke="#202020" />
          <path d="M1.500.7l14 12.800" stroke="#202020" strokeWidth="1.300" />
        </Ico>
      </Slot>
      <div className="w-[24px] shrink-0 text-center text-[11.500px] leading-[16px]">
        <div className="tracking-[-0.200px]">ENG</div>
        <div>IN</div>
      </div>
      <Slot className="w-[42px] pl-[18px]">
        <Ico w={16} h={13}>
          <path d="M.7 5C5 .3 11 .3 15.300 5M3 7.300c3-3.200 7-3.200 10 0M5.200 9.500c1.700-1.700 3.900-1.700 5.600 0" stroke="#202020" strokeWidth="1.200" />
          <circle cx="8" cy="11.300" r="1.400" fill="#202020" />
        </Ico>
      </Slot>
      <Slot className="w-[24px]">
        <Ico w={17} h={14}>
          <path d="M.6 5v4h2.700L7 12V2L3.300 5z" stroke="#202020" strokeWidth="1.100" />
          <path d="M9 5c1 1 1 3 0 4M11.300 3.200c2 2 2 5.600 0 7.600M13.600 1.500c3 3 3 8 0 11" stroke="#202020" strokeWidth="1.100" />
        </Ico>
      </Slot>
      <Slot className="w-[24px]">
        <Ico w={16} h={10}>
          <rect x=".6" y=".6" width="12.800" height="8.800" rx="2" stroke="#202020" strokeWidth="1.200" />
          <path d="M2.500 2.500h5v5h-5z" fill="#202020" />
          <path d="M15 3v4" stroke="#202020" strokeWidth="1.600" />
        </Ico>
      </Slot>
      <div className="flex h-[39px] w-[87px] shrink-0 items-center rounded-[4px] border border-[#f4f4f4] bg-[#fafafa]">
        <div className="w-[55px] whitespace-nowrap pb-[2px] text-right text-[11.500px] leading-[16px] tracking-[0px]">
          <div>2:21 PM</div>
          <div>8/6/2023</div>
        </div>
        <div className="ml-[8px] flex h-[16px] w-[16px] items-center justify-center rounded-full bg-[#0067c0] text-[10px] text-white">2</div>
      </div>
    </div>
  );
}

export default function App() {
  return (
    <div className="relative flex h-[768px] w-[1366px] flex-col overflow-hidden bg-[#f3f2f1] font-['Open_Sans','Noto_Sans',sans-serif]">
      <TitleBar />
      <Ribbon />
      <div className="flex h-[550px] shrink-0">
        <Rail />
        <div className="flex w-[1223px] shrink-0 flex-col bg-black pl-[128px]">
          <div className="flex h-[542px] w-[967px]">
            <div className="w-[2px] shrink-0 bg-[repeating-linear-gradient(to_bottom,#666_0_2px,transparent_2px_4px)]" />
            <div className="flex grow pt-[9px]">
              <Slicers />
              <Matrix />
            </div>
            <div className="w-[2px] shrink-0 bg-[repeating-linear-gradient(to_bottom,#666_0_2px,transparent_2px_4px)]" />
          </div>
          <div className="h-[2px] w-[967px] bg-[repeating-linear-gradient(to_right,#666_0_2px,transparent_2px_4px)]" />
        </div>
        <Panes />
      </div>
      <PageTabs />
      <StatusBar />
      <div className="h-px shrink-0 bg-black" />
      <Taskbar />
      <div className="absolute left-[1219px] top-[676px] flex h-[31px] w-[147px] items-center whitespace-nowrap rounded-[4px] border border-[#e2e2e2] bg-[#f9f9f9] pl-[9px] text-[11.500px] tracking-[0.080px] text-[#202020]">
        Sunday, August 6, 2023
      </div>
    </div>
  );
}
